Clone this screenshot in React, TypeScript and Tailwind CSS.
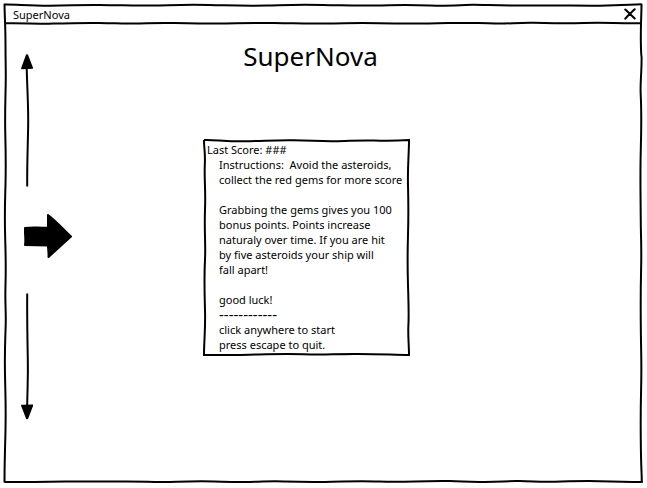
import React from "react";

const stroke = {
  fill: "none",
  stroke: "black",
  strokeWidth: 2,
  vectorEffect: "non-scaling-stroke",
} as const;

function WindowFrame() {
  return (
    <svg
      aria-hidden="true"
      className="pointer-events-none absolute inset-0 h-full w-full overflow-visible"
      viewBox="-0.5 -0.5 638 478"
      preserveAspectRatio="none"
    >
      <path {...stroke} d="M0 0 C12 -0.2 22 1.2 45 1.2 S70 0.2 95 .4 S125 1.4 148 1 S180 0 205 .5 S240 1.5 262 1 S290 0 318 .5 S350 1.4 372 1 S400 0 425 1 S460 .4 468 .2 S500 1.3 530 1 S570 1.4 595 1.2 S625 0 637 -.2" />
      <path {...stroke} d="M637 -.8 C637 12 636 20 636.4 40 S637.4 45 637 60 S635.700 80 636.2 90 S637 120 636.3 145 S636 180 636.2 210 S637.2 240 636.6 265 S636 300 636.4 330 S637.2 360 636.6 385 S636 420 636.4 445 S637.2 465 637.3 478" />
      <path {...stroke} d="M0 477.500 C20 477.500 35 477.4 60 477 S90 477.2 115 477 S145 477.6 160 477.4 S190 476.5 210 477 S230 477.6 245 477.4 S265 476.5 280 477 S300 477.6 320 477.4 S350 476.5 370 477 S390 477.6 410 477 S430 476.4 445 476.6 S460 477.6 480 477.4 S500 476.4 515 476.6 S535 477.6 550 477.2 S580 476.2 595 476.7 S620 477.500 638 477.500" />
      <path {...stroke} d="M0 -.8 C0.2 15 1 20 1 40 S1.5 65 1.2 80 S.3 110 .8 130 S1.5 160 1 180 S0 205 .6 230 S1.6 260 1 280 S1.6 305 1.2 320 S0 345 .5 370 S1.5 400 1 425 S0 455 0 478" />
    </svg>
  );
}

function TitleRule() {
  return (
    <svg
      aria-hidden="true"
      className="pointer-events-none absolute inset-x-0 bottom-0 h-px w-full overflow-visible"
      viewBox="0 0 638 1"
      preserveAspectRatio="none"
    >
      <path {...stroke} d="M1 .3 C20 0 30 .8 50 .6 S75 -.3 95 0 S115 .7 130 .5 S150 -.3 170 0 S195 .6 215 .4 S245 -.3 270 0 S295 .7 320 .5 S350 -.3 375 .2 S400 .7 425 .4 S455 -.3 475 0 S490 .7 500 .5 S515 -.4 530 -.2 S555 .5 580 0 S610 .4 637 .2" />
    </svg>
  );
}

function PanelFrame() {
  return (
    <svg
      aria-hidden="true"
      className="pointer-events-none absolute inset-0 h-full w-full overflow-visible"
      viewBox="0 0 205 215"
      preserveAspectRatio="none"
    >
      <path {...stroke} d="M0 0 C10 -.5 20 1.5 40 1.3 S70 -.2 90 .2 S115 1.5 130 1.3 S155 0 170 .5 S190 1 205 0 C205 15 203.5 25 204 45 S204.6 75 204 95 S203.4 125 204 145 S205 175 204.4 185 S205 205 205 215 C190 215 175 213.8 150 214 S120 215 100 214.3 S60 214.4 45 214.7 S15 215 0 215 C0 200 1.6 190 1 170 S.2 135 1 120 S.2 90 1 70 S.2 40 .8 25 S0 10 0 0" />
    </svg>
  );
}

function Arrows() {
  return (
    <aside aria-label="Ship movement" className="flex w-17 shrink-0 flex-col pt-7 pl-[17px]">
      <svg role="img" aria-label="Up" className="h-34 w-3" viewBox="0 0 12 136">
        <path d="M5.7 16 C6.2 36 7.2 50 7.2 68 S6 105 6.2 134.500" fill="none" stroke="black" strokeWidth="2" />
        <path d="M6.300 3 L11.300 16 L.8 16.500 L5.700 3 Z" stroke="black" strokeWidth="1.500" strokeLinejoin="round" />
      </svg>
      <svg role="img" aria-label="Ship" className="mt-[23px] ml-[3px] h-12 w-12" viewBox="0 0 48 48">
        <path d="M1 17 C8 16 15 17 24 16.500 L24 4 C32 10 39 18 47 25.500 L24.500 46 C24.800 41 24 38 24 34.500 L1 34 C2 28 .6 23 1 17 Z" stroke="black" strokeWidth="2" strokeLinejoin="round" />
      </svg>
      <svg role="img" aria-label="Down" className="mt-[25px] h-34 w-3" viewBox="0 0 12 136">
        <path d="M6.200 9.500 C6 35 6.400 55 6.800 75 S6.500 100 6.200 121" fill="none" stroke="black" strokeWidth="2" />
        <path d="M.8 121.500 L11.500 121.200 L6.400 134.500 L5.800 134.500 Z" stroke="black" strokeWidth="1.500" strokeLinejoin="round" />
      </svg>
    </aside>
  );
}

export default function App() {
  return (
    <div className="flex min-h-screen bg-white pt-1 pr-[5px] pb-1.5 pl-1 font-['Noto_Sans','Open_Sans',sans-serif] text-[11px] text-black">
      <div className="relative flex flex-1 flex-col">
        <WindowFrame />
        <header className="relative flex h-5 items-center justify-between pr-1.5 pl-[9px] leading-[15px]">
          <span>SuperNova</span>
          <button type="button" aria-label="Close" className="flex">
            <svg className="size-3" viewBox="0 0 12 12" fill="none" stroke="black" strokeWidth="2" strokeLinecap="round">
              <path d="M1.300 1.500 C4 4 7 7 10.700 10.500 M10.700 1.300 C8 4 4 7 1.300 10.700" />
            </svg>
          </button>
          <TitleRule />
        </header>
        <div className="flex flex-1">
          <Arrows />
          <main className="flex flex-1 flex-col items-center pt-3.5 pr-[101px]">
            <h1 className="pl-2 text-[26px] leading-9">SuperNova</h1>
            <section className="relative mt-[66px] w-[205px] pt-0.5 pb-[3px] pl-[3px] leading-[15px]">
              <PanelFrame />
              <p>Last Score: ###</p>
              <div className="space-y-[15px] pl-3 whitespace-nowrap">
                <p>
                  Instructions:&nbsp; Avoid the asteroids,
                  <br />
                  collect the red gems for more score
                </p>
                <p>
                  Grabbing the gems gives you 100
                  <br />
                  bonus points. Points increase
                  <br />
                  naturaly over time. If you are hit
                  <br />
                  by five asteroids your ship will
                  <br />
                  fall apart!
                </p>
                <div>
                  <p>good luck!</p>
                  <p className="text-[15px] leading-[15px]">------------</p>
                  <p>click anywhere to start</p>
                  <p>press escape to quit.</p>
                </div>
              </div>
            </section>
          </main>
        </div>
      </div>
    </div>
  );
}
